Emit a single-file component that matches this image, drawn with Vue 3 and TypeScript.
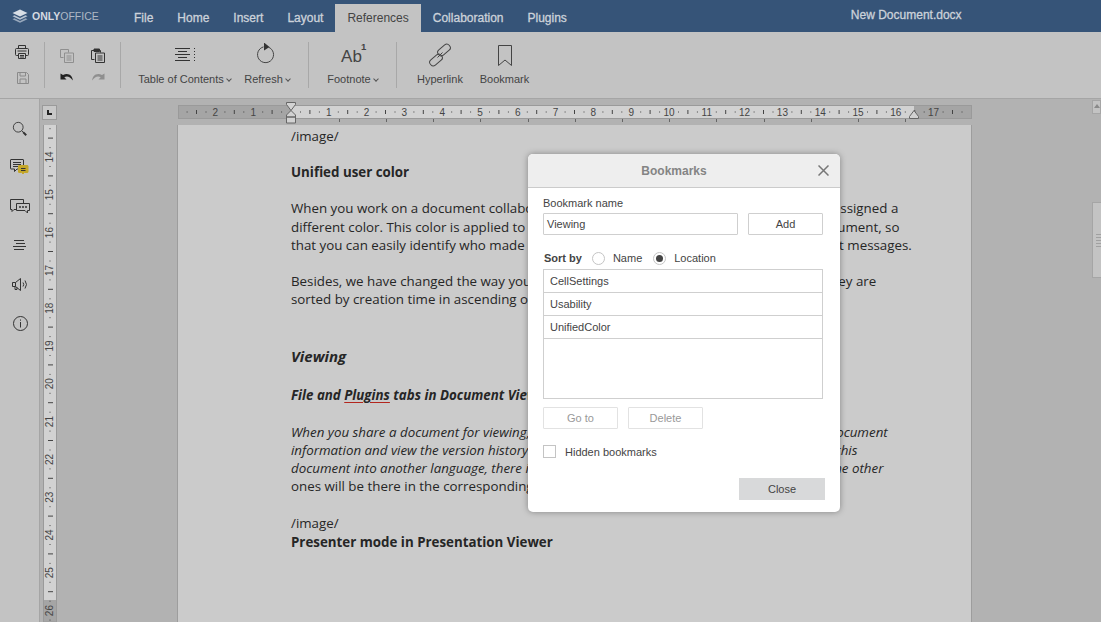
<script setup lang="ts">
const tabs = ['File', 'Home', 'Insert', 'Layout', 'References', 'Collaboration', 'Plugins']

type Line = { text: string; cls?: string }
const paragraphs: Line[][] = [
  [{ text: '/image/' }],
  [{ text: 'Unified user color', cls: 'b' }],
  [
    { text: 'When you work on a document collaboratively, every co-author gets now automatically assigned a' },
    { text: 'different color. This color is applied to both their cursors and all their changes in the document, so' },
    { text: 'that you can easily identify who made each change and who sent the comments and chat messages.' },
  ],
  [
    { text: 'Besides, we have changed the way you see the comments in the side panels, and now they are' },
    { text: 'sorted by creation time in ascending order.' },
  ],
]

const hMarks = Array.from({ length: 21 }, (_, i) => i - 3)
const hStops = Array.from({ length: 13 }, (_, i) => 113.5 + (i + 1) * 47.2)
const vMarks = Array.from({ length: 14 }, (_, i) => i + 13)
const bookmarks = ['CellSettings', 'Usability', 'UnifiedColor']

function hx(n: number) {
  return 113 + n * 37.8
}
function vy(n: number) {
  return (n - 14) * 37.8 + 32
}
</script>

<template>
  <div class="app">
    <header class="topbar">
      <div class="logo">
        <svg width="16" height="14" viewBox="0 0 16 14">
          <path d="M8 0.5 15.5 4 8 7.5 0.5 4z" fill="#d8dee6" />
          <path d="M2.5 6.3 8 8.9l5.5-2.6 2 1-7.500 3.500-7.500-3.500z" fill="#b9c4d2" />
          <path d="M2.5 9.3 8 11.900l5.500-2.600 2 1L8 13.800 0.500 10.300z" fill="#98a8bc" />
        </svg>
        <span class="logo-text"><b>ONLY</b>OFFICE</span>
      </div>
      <nav class="tabs">
        <div v-for="t in tabs" :key="t" class="tab" :class="{ active: t === 'References' }">{{ t }}</div>
      </nav>
      <div class="doc-title">New Document.docx</div>
    </header>

    <section class="toolbar">
      <div class="tb-small first">
        <svg class="ic" width="16" height="16" viewBox="0 0 16 16" fill="none" stroke="#333">
          <path d="M4.500 4V1.500h7V4M4.500 11.500H2.500a1 1 0 0 1-1-1V5.500a1 1 0 0 1 1-1h11a1 1 0 0 1 1 1v5a1 1 0 0 1-1 1h-2" />
          <path d="M4.500 9.500h7v5h-7zM6 11.500h4M6 13h4M3.500 7h9" />
        </svg>
        <svg class="ic dim" width="14" height="14" viewBox="0 0 14 14" fill="none" stroke="#8a8a8a">
          <path d="M1.500 1.500h9l2 2v9h-11zM4 1.500v3.500h5.500V1.500M4 12.500V8h6v4.500" />
        </svg>
      </div>
      <div class="sep"></div>
      <div class="tb-grid">
        <svg class="ic" width="16" height="16" viewBox="0 0 16 16" fill="none" stroke="#8f8f8f">
          <path d="M1.500 1.500h8v3M1.500 1.500v8h3" />
          <path d="M5.500 5h9v9.500h-9zM7.500 8h5M7.500 10h5M7.500 12h5" />
        </svg>
        <svg class="ic" width="16" height="16" viewBox="0 0 16 16" fill="none" stroke="#333">
          <path d="M1.500 2.500h3M9 2.500h1.500v2M1.500 2.500v9h3" />
          <path d="M4 1h5.500v2.500H4z" fill="#333" />
          <path d="M5.500 5h9v9.500h-9zM7.500 8h5M7.500 10h5M7.500 12h5" />
        </svg>
        <svg class="ic" width="14" height="10" viewBox="0 0 14 10">
          <path d="M0.500 0.500v6h6L4.300 4.300C6.800 2.600 10 3.300 12.800 7.500 12.500 3 9 -0.500 3 1.900z" fill="#222" />
        </svg>
        <svg class="ic" width="14" height="10" viewBox="0 0 14 10">
          <path d="M13.500 0.500v6h-6l2.200-2.200C7.200 2.600 4 3.300 1.200 7.500 1.500 3 5 -0.500 11 1.900z" fill="#8f8f8f" />
        </svg>
      </div>
      <div class="sep"></div>
      <div class="big toc">
        <svg width="24" height="24" viewBox="0 0 24 24" stroke="#333" fill="none">
          <path d="M2 5.500h15M5 8.500h9M2 11.500h15M5 14.500h9M2 17.500h15" />
          <path d="M21.500 5v1M21.500 8v1M21.500 11v1M21.500 14v1M21.500 17v1" />
        </svg>
        <span class="lbl">Table of Contents<i class="caret"></i></span>
      </div>
      <div class="big refresh">
        <svg width="24" height="24" viewBox="2.500 1.500 24 24" fill="none" stroke="#444">
          <path d="M10 5.400a8 8 0 1 0 5 .300" />
          <path d="M10.500 1 16 5.500 10.500 9z" fill="#333" stroke="none" />
        </svg>
        <span class="lbl">Refresh<i class="caret"></i></span>
      </div>
      <div class="sep"></div>
      <div class="big foot">
        <span class="ab">Ab<sup>1</sup></span>
        <span class="lbl">Footnote<i class="caret"></i></span>
      </div>
      <div class="sep"></div>
      <div class="big link">
        <svg width="24" height="24" viewBox="0 0 24 24" fill="none" stroke="#444">
          <rect x="1" y="13.500" width="14" height="7" rx="3.200" transform="rotate(-40 8 17)" />
          <rect x="9" y="3.500" width="14" height="7" rx="3.200" transform="rotate(-40 16 7)" />
          <path d="M9.500 14.500 14.500 9.500" />
        </svg>
        <span class="lbl">Hyperlink</span>
      </div>
      <div class="big mark">
        <svg width="24" height="24" viewBox="0 0 24 24" fill="none" stroke="#444">
          <path d="M5.500 2.500h13v20l-6.500-5.500-6.500 5.500z" />
        </svg>
        <span class="lbl">Bookmark</span>
      </div>
    </section>

    <main class="main">
      <aside class="sidebar">
        <div class="side-btn">
          <svg width="16" height="16" viewBox="0 0 18 18" fill="none" stroke="#333">
            <circle cx="7" cy="7" r="5.500" />
            <path d="M11 11l1.500 1.500" />
            <path d="M12.500 12.500l3.500 3.500" stroke-width="2.200" />
          </svg>
        </div>
        <div class="side-btn">
          <svg width="20" height="18" viewBox="0 0 20 18" fill="none" stroke="#333">
            <path d="M1 .500h12a.5.5 0 0 1 .5.500v8.500a.5.500 0 0 1-.5.500H7l-2.500 2.500V10H1a.5.500 0 0 1-.5-.500V1A.5.500 0 0 1 1 .500zM3 3.500h8M3 5.500h8M3 7.500h5" />
            <path d="M9 6.500h8.500a.5.500 0 0 1 .5.500v6a.5.500 0 0 1-.5.500h-3l-1.500 1.500-1.500-1.500H9a.5.500 0 0 1-.5-.500V7a.5.500 0 0 1 .5-.500z" fill="#c4a72a" stroke="#c4a72a" />
            <path d="M11 9.500h4.500M11 11.500h4.500" stroke="#333" />
          </svg>
        </div>
        <div class="side-btn">
          <svg width="20" height="16" viewBox="0 0 20 16" fill="none" stroke="#333">
            <path d="M6 10.500H4l-2 2v-2H.5V.500h13V4" />
            <path d="M6.500 4.500h13v7h-2v2.500l-2.500-2.500H6.500z" />
            <path d="M9 8h2M12 8h2M15 8h2" stroke-width="1.500" />
          </svg>
        </div>
        <div class="side-btn">
          <svg width="14" height="12" viewBox="0 0 14 12" fill="none" stroke="#333">
            <path d="M1 .500h10M3 3.500h9M0 6.500h13M1 9.500h10" />
          </svg>
        </div>
        <div class="side-btn">
          <svg width="16" height="14" viewBox="0 0 16 14" fill="none" stroke="#333">
            <path d="M.500 4.500h3v4h-3zM3.500 4.500l5-4v12l-5-4M3 8.500v3h2V9.500" />
            <path d="M11 4.500q1.500 2 0 4M13 2.500q3 4 0 8" />
          </svg>
        </div>
        <div class="side-btn">
          <svg width="15" height="15" viewBox="0 0 15 15" fill="none" stroke="#333">
            <circle cx="7.500" cy="7.500" r="7" />
            <path d="M7.500 6v5.500M7.500 3.500v1.200" />
          </svg>
        </div>
      </aside>

      <div class="workspace">
        <div class="h-row">
          <div class="corner"><span></span></div>
          <svg class="h-ruler" width="794" height="20" viewBox="0 0 794 20">
            <rect x=".5" y=".5" width="793" height="13" fill="#a5a5a5" stroke="#9a9a9a" />
            <rect x="113" y="1" width="623" height="12" fill="#d2d2d2" />
            <g v-for="n in hMarks" :key="n">
              <text v-if="n !== 0 && n !== -3" :x="hx(n)" y="11" class="rt" text-anchor="middle">{{ Math.abs(n) }}</text>
              <path :d="`M${hx(n) + 18.9} 5v4`" stroke="#444" />
              <path :d="`M${hx(n) + 9.5} 6.500v1M${hx(n) + 28.4} 6.500v1`" stroke="#444" />
            </g>
            <path v-for="x in hStops" :key="x" :d="`M${Math.round(x) + 0.5} 14v3`" stroke="#666" />
            <path d="M108.500-2.500h9v2l-4.500 6-4.500-6zM108.500 12v-2l4.500-4.500 4.500 4.500v2zM108.500 12h9v6h-9z" fill="#d2d2d2" stroke="#666" />
            <path d="M736 5.500l4.500 6v2h-9v-2z" fill="#d2d2d2" stroke="#666" />
          </svg>
        </div>
        <div class="v-row">
          <svg class="v-ruler" width="14" height="497" viewBox="0 0 14 497">
            <rect x=".5" y="0" width="13" height="497" fill="#a5a5a5" stroke="#9a9a9a" />
            <rect x="1" y="0" width="12" height="475" fill="#d2d2d2" />
            <g v-for="n in vMarks" :key="n">
              <text v-if="n !== 13" :transform="`translate(10 ${vy(n)}) rotate(-90)`" class="rt" text-anchor="middle">{{ n }}</text>
              <path :d="`M5 ${vy(n) + 18.9}h5`" stroke="#444" />
              <path :d="`M6.500 ${vy(n) + 9.5}h1M6.500 ${vy(n) + 28.4}h1`" stroke="#444" />
            </g>
          </svg>
          <div class="canvas">
            <article class="page">
              <div v-for="(p, i) in paragraphs" :key="i" class="para">
                <div v-for="l in p" :key="l.text" :class="l.cls">{{ l.text }}</div>
              </div>
              <h2 class="view-head">Viewing</h2>
              <div class="para b i sub">File and <u>Plugins</u> tabs in Document Viewer</div>
              <div class="para notes">
                <div class="i">When you share a document for viewing, your reader can now open the File tab to read the document</div>
                <div class="i">information and view the version history. And now if you ever want to translate a full copy of this</div>
                <div class="i">document into another language, there is the Plugins tab, where the Translator and also all the other</div>
                <div>ones will be there in the corresponding tab.</div>
              </div>
              <div>/image/</div>
              <div class="b">Presenter mode in Presentation Viewer</div>
            </article>
          </div>
          <div class="scrollbar">
            <div class="sc-btn"><i></i></div>
            <div class="sc-thumb"><i></i></div>
          </div>
        </div>
      </div>
    </main>

    <div class="dialog">
      <div class="dlg-head">
        <span>Bookmarks</span>
        <svg class="dlg-x" width="11" height="11" viewBox="0 0 11 11" stroke="#777" stroke-width="1.500">
          <path d="M.5.500l10 10M10.500.500l-10 10" />
        </svg>
      </div>
      <div class="dlg-body">
        <label class="fld-label">Bookmark name</label>
        <div class="name-row">
          <div class="input">Viewing</div>
          <div class="btn add">Add</div>
        </div>
        <div class="sort-row">
          <b>Sort by</b>
          <i class="radio"></i><span>Name</span>
          <i class="radio on"></i><span>Location</span>
        </div>
        <div class="list">
          <div v-for="b in bookmarks" :key="b" class="item">{{ b }}</div>
        </div>
        <div class="btn-row">
          <div class="btn off">Go to</div>
          <div class="btn off">Delete</div>
        </div>
        <div class="check-row"><i class="check"></i><span>Hidden bookmarks</span></div>
        <div class="close-row"><div class="close-btn">Close</div></div>
      </div>
    </div>
  </div>
</template>

<style>
html,
body {
  margin: 0;
  overflow: hidden;
}
</style>

<style scoped>
.app {
  position: relative;
  width: 1101px;
  height: 622px;
  overflow: hidden;
  display: flex;
  flex-direction: column;
  font-family: 'Liberation Sans', Arial, sans-serif;
  font-size: 11px;
  color: #333;
  background: #c3c3c3;
}

.topbar {
  height: 32px;
  flex: none;
  display: flex;
  background: #365478;
  color: #ccd2da;
}
.logo {
  width: 122px;
  flex: none;
  display: flex;
  align-items: center;
  gap: 4px;
  padding: 0 0 1px 12px;
  box-sizing: border-box;
}
.logo-text {
  font-size: 10.5px;
  color: #aeb8c5;
}
.logo-text b {
  color: #d5dae0;
}
.tabs {
  display: flex;
  padding-top: 4px;
}
.tab {
  padding: 0 12px;
  line-height: 28px;
  font-size: 12px;
  -webkit-text-stroke: 0.3px currentColor;
}
.tab.active {
  background: #c3c3c3;
  color: #444;
  -webkit-text-stroke: 0;
}
.doc-title {
  margin-left: 272px;
  line-height: 31px;
  font-size: 12px;
  -webkit-text-stroke: 0.3px currentColor;
}

.toolbar {
  height: 67px;
  flex: none;
  box-sizing: border-box;
  display: flex;
  border-bottom: 1px solid #a5a5a5;
  background: #c3c3c3;
}
.ic.dim {
  margin-left: 1px;
}
.tb-small {
  width: 44px;
  flex: none;
  display: flex;
  flex-direction: column;
  align-items: center;
  gap: 11px;
  padding-top: 12px;
  box-sizing: border-box;
}
.sep {
  width: 1px;
  height: 46px;
  margin-top: 10px;
  background: #a8a8a8;
  flex: none;
}
.tb-grid {
  width: 75px;
  flex: none;
  display: grid;
  grid-template-columns: 31px 31px;
  grid-template-rows: 27px 18px;
  justify-content: center;
  justify-items: center;
  align-items: center;
  padding-top: 10px;
  box-sizing: border-box;
}
.big {
  display: flex;
  flex-direction: column;
  align-items: center;
  flex: none;
  padding-top: 11px;
  box-sizing: border-box;
}
.lbl {
  margin-top: 4px;
  line-height: 16px;
  white-space: nowrap;
  color: #444;
}
.caret {
  display: inline-block;
  width: 3px;
  height: 3px;
  margin: 0 1px 2px 3px;
  border-right: 1px solid #555;
  border-bottom: 1px solid #555;
  transform: rotate(45deg);
}
.toc {
  width: 92px;
  margin-left: 18px;
}
.refresh {
  width: 47px;
  margin-left: 13px;
  margin-right: 17px;
}
.foot {
  width: 52px;
  margin-left: 18px;
  margin-right: 17px;
}
.ab {
  height: 24px;
  font-size: 17px;
  line-height: 27px;
  color: #444;
  position: relative;
  margin-right: 3px;
}
.ab sup {
  font-size: 9.5px;
  font-weight: bold;
  line-height: 10px;
  position: absolute;
  top: -1px;
  left: 20px;
}
.link {
  width: 50px;
  margin-left: 18px;
}
.mark {
  width: 53px;
  margin-left: 13px;
}

.main {
  flex: 1;
  min-height: 0;
  display: flex;
}
.sidebar {
  width: 40px;
  flex: none;
  box-sizing: border-box;
  border-right: 1px solid #a5a5a5;
  padding: 10px 0 0 1px;
  background: #c3c3c3;
}
.side-btn {
  height: 39px;
  display: flex;
  align-items: center;
  justify-content: center;
}
.workspace {
  flex: 1;
  min-width: 0;
  display: flex;
  flex-direction: column;
  background: #b2b2b2;
}
.h-row {
  height: 26px;
  flex: none;
  display: flex;
  padding-top: 6px;
  box-sizing: border-box;
}
.corner {
  width: 15px;
  height: 15px;
  margin-left: 2px;
  box-sizing: border-box;
  border: 1px solid #9a9a9a;
  background: #c8c8c8;
  position: relative;
}
.corner span {
  position: absolute;
  left: 4px;
  top: 4px;
  width: 5px;
  height: 5px;
  border-left: 2px solid #222;
  border-bottom: 2px solid #222;
  box-sizing: border-box;
}
.h-ruler {
  margin-left: 121px;
  flex: none;
  overflow: visible;
}
.rt {
  font-family: 'Liberation Sans', Arial, sans-serif;
  font-size: 10px;
  fill: #444;
}
.v-row {
  flex: 1;
  min-height: 0;
  display: flex;
}
.v-ruler {
  margin-left: 3px;
  flex: none;
}
.canvas {
  width: 915px;
  flex: none;
  padding-left: 120px;
  box-sizing: border-box;
  overflow: hidden;
}
.page {
  width: 795px;
  height: 100%;
  box-sizing: border-box;
  background: #cbcbcb;
  border-left: 1px solid #9d9d9d;
  border-right: 1px solid #9d9d9d;
  padding: 2px 0 0 113px;
  font-family: 'Open Sans', sans-serif;
  font-size: 13.33px;
  line-height: 18.2px;
  color: #262626;
  white-space: nowrap;
}
.para {
  margin-bottom: 18px;
}
.b {
  font-weight: bold;
}
.i {
  font-style: italic;
}
.view-head {
  margin: 37px 0 0;
  font-size: 15px;
  line-height: 22px;
  font-weight: bold;
  font-style: italic;
}
.sub {
  margin-top: 19px;
}
.notes {
  margin-bottom: 19px;
}
.page u {
  text-decoration-color: #b3261e;
  text-underline-offset: 2px;
}
.scrollbar {
  width: 9px;
  flex: none;
  margin-left: auto;
}
.sc-btn {
  height: 14px;
  margin-top: -25px;
  border: 1px solid #a5a5a5;
  background: #c3c3c3;
  box-sizing: border-box;
  position: relative;
}
.sc-btn i {
  position: absolute;
  left: 1px;
  top: 3px;
  border-left: 3px solid transparent;
  border-right: 3px solid transparent;
  border-bottom: 4px solid #8a8a8a;
}
.sc-thumb {
  height: 76px;
  margin-top: 88px;
  border: 1px solid #a5a5a5;
  border-right: none;
  background: #c3c3c3;
  box-sizing: border-box;
  position: relative;
}
.sc-thumb i {
  position: absolute;
  left: 3px;
  top: 31px;
  right: 0;
  height: 13px;
  background: repeating-linear-gradient(#a0a0a0 0 1px, transparent 1px 3px);
}

.dialog {
  position: absolute;
  left: 528px;
  top: 154px;
  width: 312px;
  height: 358px;
  border-radius: 5px;
  background: #fff;
  box-shadow: 0 0 6px rgba(0, 0, 0, 0.35);
  overflow: hidden;
  color: #444;
}
.dlg-head {
  height: 34px;
  box-sizing: border-box;
  border-bottom: 1px solid #cbcbcb;
  padding: 1px 20px 0 0;
  background: #eee;
  text-align: center;
  line-height: 33px;
  font-size: 12px;
  font-weight: bold;
  color: #848484;
  position: relative;
}
.dlg-x {
  position: absolute;
  right: 11px;
  top: 11px;
}
.dlg-body {
  padding: 9px 17px 0 15px;
}
.fld-label {
  display: block;
  line-height: 13px;
}
.name-row {
  display: flex;
  justify-content: space-between;
  margin-top: 3px;
}
.input {
  width: 195px;
  height: 22px;
  box-sizing: border-box;
  border: 1px solid #cfcfcf;
  border-radius: 1px;
  padding-left: 3px;
  line-height: 20px;
}
.btn {
  width: 75px;
  height: 22px;
  box-sizing: border-box;
  border: 1px solid #cfcfcf;
  border-radius: 1px;
  text-align: center;
  line-height: 20px;
}
.sort-row {
  display: flex;
  align-items: center;
  height: 14px;
  margin: 16px 0 0 1px;
}
.sort-row b {
  margin-right: 10px;
}
.sort-row span {
  margin-right: 11px;
}
.radio {
  width: 13px;
  height: 13px;
  margin-right: 8px;
  box-sizing: border-box;
  border: 1px solid #c4c4c4;
  border-radius: 50%;
  position: relative;
}
.radio.on::after {
  content: '';
  position: absolute;
  left: 2px;
  top: 2px;
  width: 7px;
  height: 7px;
  border-radius: 50%;
  background: #444;
}
.list {
  height: 130px;
  margin-top: 4px;
  box-sizing: border-box;
  border: 1px solid #cfcfcf;
}
.item {
  height: 23px;
  box-sizing: border-box;
  border-bottom: 1px solid #cfcfcf;
  padding-left: 6px;
  line-height: 22px;
}
.btn-row {
  display: flex;
  gap: 10px;
  margin-top: 8px;
}
.btn.off {
  border-color: #e2e2e2;
  color: #999;
}
.check-row {
  display: flex;
  align-items: center;
  gap: 9px;
  margin-top: 16px;
}
.check {
  width: 13px;
  height: 13px;
  box-sizing: border-box;
  border: 1px solid #c4c4c4;
}
.close-row {
  display: flex;
  justify-content: flex-end;
  margin: 20px -2px 0 0;
}
.close-btn {
  width: 86px;
  height: 22px;
  background: #d8d9da;
  text-align: center;
  line-height: 22px;
}
</style>
